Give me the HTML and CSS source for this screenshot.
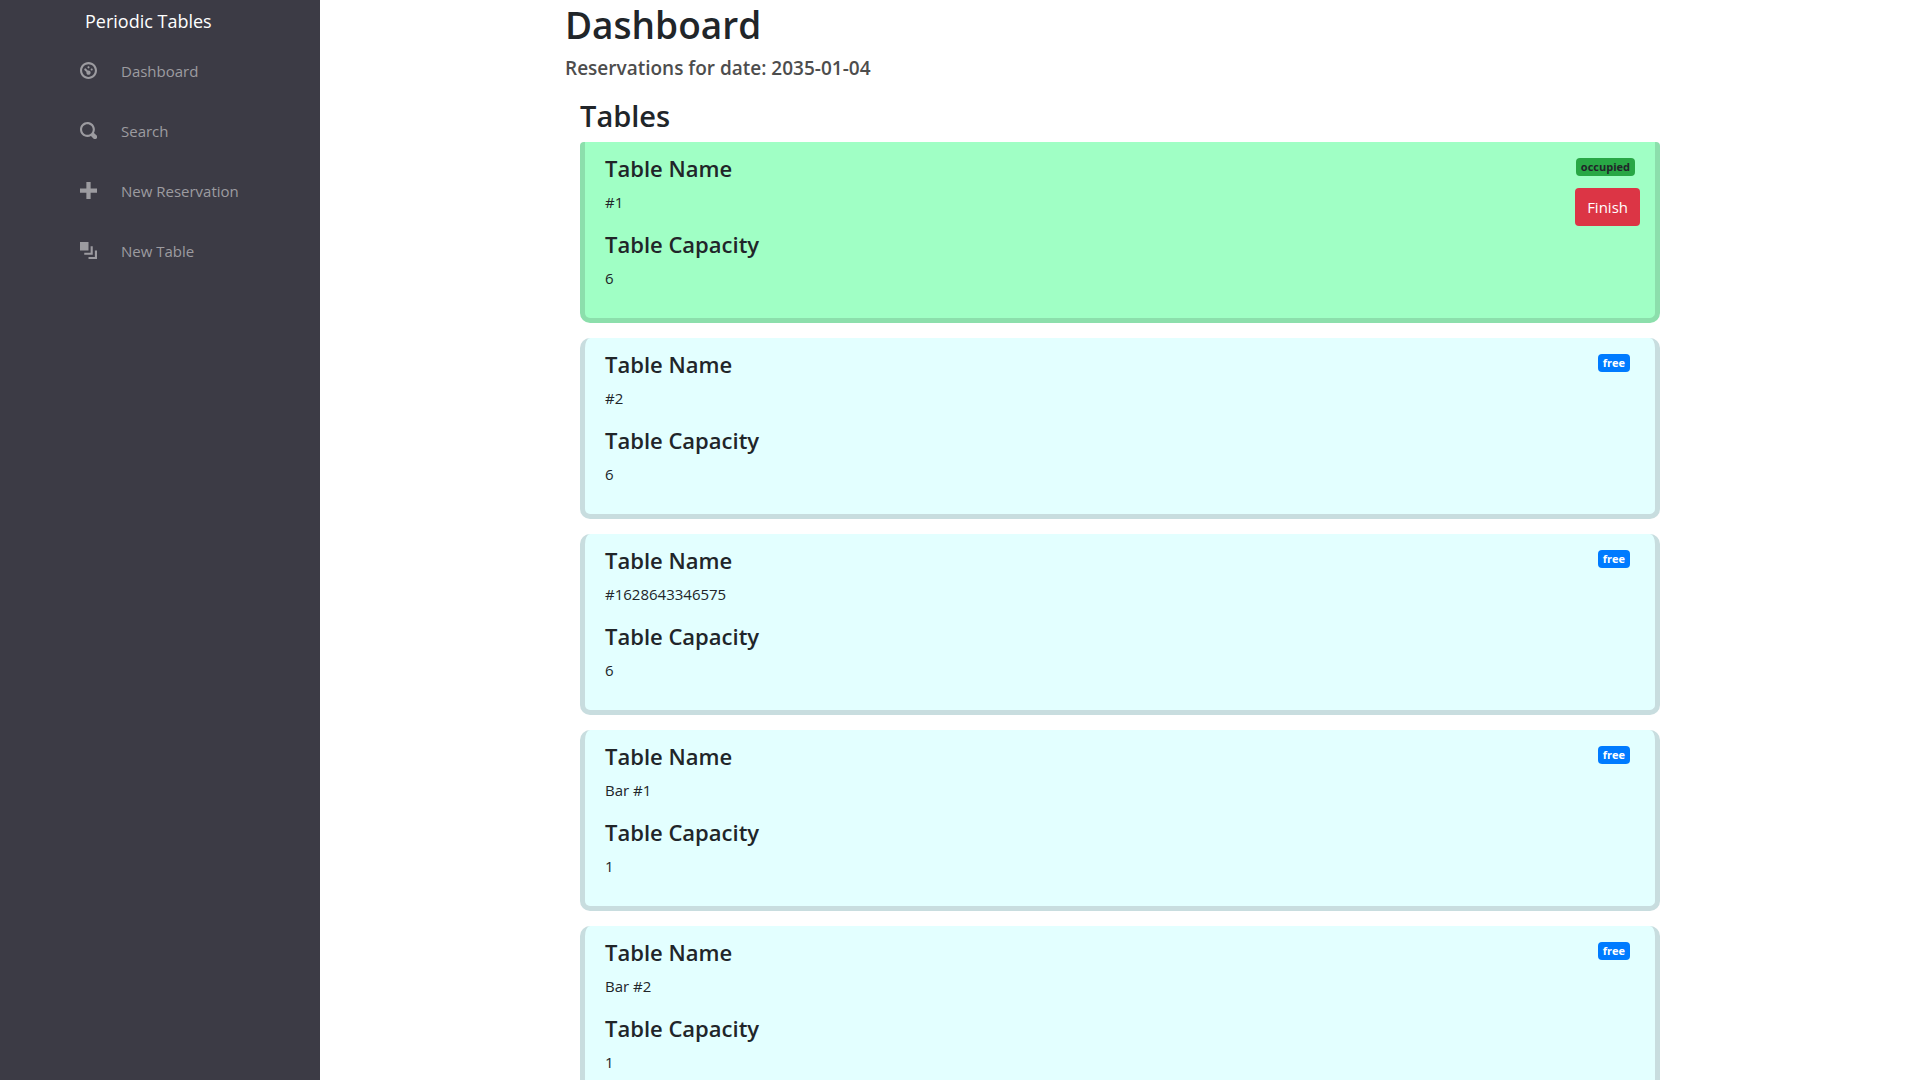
FILE: index.html
```html
<!DOCTYPE html>
<html lang="en">
<head>
<meta charset="utf-8">
<meta name="viewport" content="width=device-width, initial-scale=1">
<title>Periodic Tables</title>
<link rel="stylesheet" href="styles.css">
</head>
<body>
<div class="app">
  <nav class="sidebar" aria-label="Main">
    <a class="brand" href="#">Periodic Tables</a>
    <ul class="nav">
      <li><a class="nav-link" href="#">
        <svg class="icon" viewBox="0 0 8 8" aria-hidden="true"><path d="M4 0c-2.200 0-4 1.800-4 4s1.800 4 4 4 4-1.800 4-4-1.800-4-4-4zm0 1c1.660 0 3 1.340 3 3s-1.340 3-3 3-3-1.340-3-3 1.340-3 3-3zm0 1c-.280 0-.500.220-.500.500s.220.500.500.500.500-.220.500-.500-.220-.500-.500-.500zm-1.660 1a.500.500 0 0 0-.190.840l.910.910c-.020.080-.060.160-.060.250 0 .550.450 1 1 1s1-.450 1-1-.450-1-1-1c-.090 0-.170.040-.250.060l-.910-.910a.500.500 0 0 0-.440-.160.500.500 0 0 0-.060 0zm3.160 0c-.280 0-.500.220-.500.500s.220.500.500.500.500-.220.500-.500-.220-.500-.500-.500z"/></svg>
        <span>Dashboard</span></a></li>
      <li><a class="nav-link" href="#">
        <svg class="icon" viewBox="0 0 8 8" aria-hidden="true"><path d="M3.500 0c-1.930 0-3.500 1.570-3.500 3.500s1.570 3.500 3.500 3.500c.590 0 1.170-.140 1.660-.410a1 1 0 0 0 .130.130l1 1a1.020 1.020 0 1 0 1.440-1.440l-1-1a1 1 0 0 0-.160-.130c.270-.490.440-1.060.440-1.660 0-1.930-1.550-3.500-3.500-3.500zm0 1c1.390 0 2.500 1.110 2.500 2.500 0 .660-.240 1.270-.660 1.720l-.030.030a1 1 0 0 0-.130.130c-.440.400-1.040.630-1.690.630-1.390 0-2.500-1.110-2.500-2.500s1.110-2.500 2.500-2.500z"/></svg>
        <span>Search</span></a></li>
      <li><a class="nav-link" href="#">
        <svg class="icon" viewBox="0 0 8 8" aria-hidden="true"><path d="M3 0v3h-3v2h3v3h2v-3h3v-2h-3v-3h-2z"/></svg>
        <span>New Reservation</span></a></li>
      <li><a class="nav-link" href="#">
        <svg class="icon" viewBox="0 0 8 8" aria-hidden="true"><path d="M0 0v4h4v-4h-4zm5 2v3h-3v1h4v-4h-1zm2 2v3h-3v1h4v-4h-1z"/></svg>
        <span>New Table</span></a></li>
    </ul>
  </nav>
  <main class="main">
    <div class="container">
      <h1 class="title">Dashboard</h1>
      <h2 class="date">Reservations for date: 2035-01-04</h2>
      <section class="tables">
        <h2 class="tables-title">Tables</h2>
        <article class="card card-occupied">
          <div class="details">
            <h3 class="label">Table Name</h3><p class="value">#1</p>
            <h3 class="label">Table Capacity</h3><p class="value">6</p>
          </div>
          <div class="status"><span class="badge badge-occupied">occupied</span><button class="finish" type="button">Finish</button></div>
        </article>
        <article class="card">
          <div class="details">
            <h3 class="label">Table Name</h3><p class="value">#2</p>
            <h3 class="label">Table Capacity</h3><p class="value">6</p>
          </div>
          <div class="status"><span class="badge">free</span></div>
        </article>
        <article class="card">
          <div class="details">
            <h3 class="label">Table Name</h3><p class="value">#1628643346575</p>
            <h3 class="label">Table Capacity</h3><p class="value">6</p>
          </div>
          <div class="status"><span class="badge">free</span></div>
        </article>
        <article class="card">
          <div class="details">
            <h3 class="label">Table Name</h3><p class="value">Bar #1</p>
            <h3 class="label">Table Capacity</h3><p class="value">1</p>
          </div>
          <div class="status"><span class="badge">free</span></div>
        </article>
        <article class="card">
          <div class="details">
            <h3 class="label">Table Name</h3><p class="value">Bar #2</p>
            <h3 class="label">Table Capacity</h3><p class="value">1</p>
          </div>
          <div class="status"><span class="badge">free</span></div>
        </article>
      </section>
    </div>
  </main>
</div>
</body>
</html>
```
FILE: styles.css
```css
*, *::before, *::after { box-sizing: border-box; }
html { scrollbar-width: none; }
body {
  margin: 0;
  background: #fff;
  color: #212529;
  font-family: "Segoe UI", "Open Sans", "Noto Sans", sans-serif;
  font-size: 15px;
  line-height: 24px;
}
h1, h2, h3, p, ul { margin: 0; padding: 0; }
h1, h2, h3 { font-weight: 600; }

.app { display: flex; min-height: 100vh; }

.sidebar {
  flex: 0 0 320px;
  padding: 6px 16px 0 80px;
  background: #3c3b45;
}
.brand {
  display: block;
  padding-left: 5px;
  color: #fff;
  font-size: 18px;
  line-height: 30px;
  text-decoration: none;
}
.nav { list-style: none; padding-top: 5px; }
.nav-link {
  display: flex;
  align-items: center;
  gap: 24px;
  height: 60px;
  color: #9c9ba0;
  text-decoration: none;
}
.icon { width: 17px; height: 17px; margin-bottom: 2px; fill: currentColor; }

.main { flex: 1; min-width: 0; }
.container { max-width: 1140px; margin: 0 auto; padding: 0 15px; }
.title { padding-bottom: 6px; font-size: 37px; line-height: 50px; }
.date { padding-bottom: 16px; color: #4d4d4d; font-size: 19px; line-height: 24px; }
.tables { padding: 0 15px; }
.tables-title { padding-bottom: 6px; font-size: 29px; line-height: 40px; }

.card {
  display: flex;
  justify-content: space-between;
  margin-bottom: 15px;
  padding: 12px 25px 12px 20px;
  border: 5px solid #c8dddf;
  border-top: 0;
  border-radius: 10px;
  background: #e3ffff;
}
.card-occupied {
  padding-right: 15px;
  border-color: #8cdfac;
  border-radius: 4px 4px 10px 10px;
  background: #a0ffc5;
}
.label { padding-bottom: 7px; font-size: 22px; line-height: 29px; }
.value { padding-bottom: 16px; }

.status {
  display: flex;
  flex-direction: column;
  align-items: flex-end;
  gap: 12px;
  padding-top: 4px;
}
.badge {
  padding: 0 5px;
  border-radius: 4px;
  background: #007bff;
  color: #fff;
  font-size: 11px;
  font-weight: 700;
  line-height: 18px;
}
.badge-occupied { margin-right: 5px; background: #28a745; color: #212529; }
.finish {
  padding: 7px 12px;
  border: 0;
  border-radius: 4px;
  background: #dc3545;
  color: #fff;
  font: inherit;
}
```
